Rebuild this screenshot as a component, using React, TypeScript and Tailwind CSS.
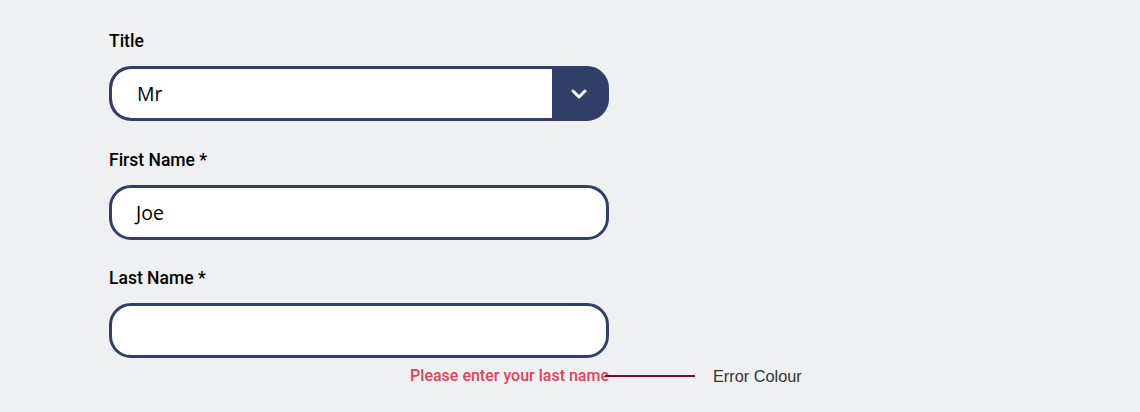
import React from "react";

const navy = "border-[#323f69]";

function Label({ children }: { children: React.ReactNode }) {
  return (
    <div className="h-6 text-[17.5px] leading-6 font-medium text-black" style={{ fontFamily: "Roboto, sans-serif" }}>
      {children}
    </div>
  );
}

export default function App() {
  return (
    <div className="w-[1140px] h-[412px] bg-[#eff0f2] overflow-hidden">
      <div className="pl-[109px] pt-[29px] flex flex-col">
        <Label>Title</Label>
        <div className={`mt-[13px] w-[500px] h-[55px] rounded-[22px] border-[3px] ${navy} bg-[#323f69] flex overflow-hidden`}>
          <div
            className="flex-1 flex items-center pl-[25px] text-[19.5px] text-black bg-white rounded-l-[19px]"
            style={{ fontFamily: "'Open Sans', sans-serif" }}
          >
            Mr
          </div>
          <div className="w-[54px] flex items-center justify-center">
            <svg width="18" height="12" viewBox="0 0 18 12" fill="none">
              <polyline points="3,3 9,9 15,3" stroke="white" strokeWidth="3" strokeLinecap="round" strokeLinejoin="round" />
            </svg>
          </div>
        </div>

        <div className="mt-[27px]">
          <Label>First Name *</Label>
        </div>
        <div
          className={`mt-[13px] w-[500px] h-[55px] rounded-[22px] border-[3px] ${navy} bg-white flex items-center pl-[24px] text-[19.5px] text-black`}
          style={{ fontFamily: "'Open Sans', sans-serif" }}
        >
          Joe
        </div>

        <div className="mt-[26px]">
          <Label>Last Name *</Label>
        </div>
        <div className={`mt-[13px] w-[500px] h-[55px] rounded-[22px] border-[3px] ${navy} bg-white`} />

        <div className="mt-[6px] flex items-center h-6">
          <div
            className="w-[500px] text-right text-[16px] leading-6 font-medium text-[#e0435a]"
            style={{ fontFamily: "Roboto, sans-serif" }}
          >
            Please enter your last name
          </div>
          <div className="ml-[-4px] w-[90px] h-[2px] bg-[#7c0a30]" />
          <div
            className="ml-[18px] text-[16.3px] leading-6 text-[#333333]"
            style={{ fontFamily: "'Liberation Sans', Arial, sans-serif" }}
          >
            Error Colour
          </div>
        </div>
      </div>
    </div>
  );
}
